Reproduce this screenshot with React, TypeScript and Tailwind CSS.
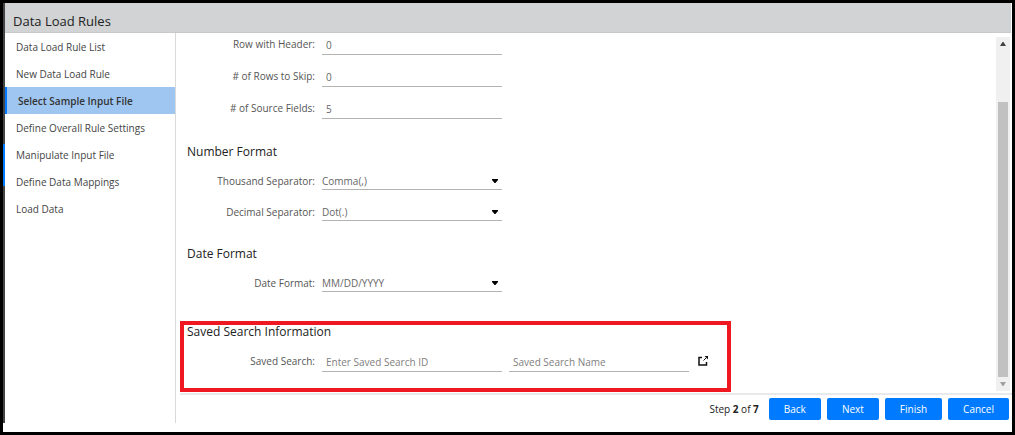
import type { ReactNode } from 'react'

const steps = [
  'Data Load Rule List',
  'New Data Load Rule',
  'Select Sample Input File',
  'Define Overall Rule Settings',
  'Manipulate Input File',
  'Define Data Mappings',
  'Load Data',
]

const activeStep = 'Select Sample Input File'

function SectionTitle({ children }: { children: ReactNode }) {
  return <h2 className="mb-[9px] text-[12px] leading-[14px] text-[#222]">{children}</h2>
}

function FieldRow({ id, label, children }: { id: string; label: string; children: ReactNode }) {
  return (
    <div className="flex items-center gap-[7px]">
      <label htmlFor={id} className="w-32 shrink-0 text-right leading-[18px] text-[#555]">
        {label}
      </label>
      {children}
    </div>
  )
}

function TextField({ id, value, placeholder }: { id: string; value?: string; placeholder?: string }) {
  return (
    <input
      id={id}
      type="text"
      defaultValue={value}
      placeholder={placeholder}
      aria-label={placeholder}
      className="h-[22px] w-[180px] border-b border-[#b3b3b3] bg-transparent px-1 pt-0.5 text-[#666] outline-none placeholder:text-[#808080]"
    />
  )
}

function SelectField({ id, options }: { id: string; options: string[] }) {
  return (
    <div className="relative h-[18px] w-[180px]">
      <select
        id={id}
        className="h-full w-full appearance-none border-b border-[#b3b3b3] bg-transparent pt-px text-[#666] outline-none"
      >
        {options.map((option) => (
          <option key={option}>{option}</option>
        ))}
      </select>
      <svg
        viewBox="0 0 6 4"
        className="pointer-events-none absolute top-[7px] right-1 h-1 w-1.5"
        aria-hidden="true"
      >
        <path d="M0 0h6v1L3.5 4h-1L0 1z" fill="#000" />
      </svg>
    </div>
  )
}

function WizardButton({ children }: { children: ReactNode }) {
  return (
    <button
      type="button"
      className="h-[22px] rounded-[2px] bg-[#007bff] px-[15px] text-white hover:bg-[#0069d9]"
    >
      {children}
    </button>
  )
}

function ScrollBar() {
  return (
    <div className="mt-1 mr-0.5 mb-0.5 flex w-[14px] shrink-0 flex-col items-center bg-[#f0f0f0]" aria-hidden="true">
      <svg viewBox="0 0 6 4" className="mt-[5px] h-1 w-1.5">
        <path d="M2.5 0h1L6 4H0z" fill="#444" />
      </svg>
      <div className="mt-14 w-[10px] flex-1 bg-[#c1c1c1]" />
      <svg viewBox="0 0 6 4" className="my-[5px] h-1 w-1.5">
        <path d="M0 0h6L3.5 4h-1z" fill="#a0a0a0" />
      </svg>
    </div>
  )
}

export default function App() {
  return (
    <div className="flex min-h-screen flex-col bg-black p-[3px] font-['Open_Sans','Noto_Sans',sans-serif] text-[10px]">
      <div className="flex flex-1 flex-col bg-white pb-[9px]">
        <div className="flex flex-1">
          {/* Window edge */}
          <div className="w-0.5 shrink-0 bg-[#444] pt-[141px]">
            <div className="h-[42px] bg-[#007bff]" />
          </div>

          <div className="flex min-w-0 flex-1 flex-col">
            <header className="mr-px flex h-[30px] items-center border-b border-[#c8c9ca] bg-[#d1d3d4] pt-1.5 pl-2">
              <h1 className="text-[13px] leading-5 text-[#222]">Data Load Rules</h1>
            </header>

            <div className="flex flex-1">
              {/* Steps */}
              <nav className="w-[171px] shrink-0 border-r border-[#d9d9d9]">
                <ul>
                  {steps.map((step) => (
                    <li key={step}>
                      <a
                        href="#"
                        aria-current={step === activeStep ? 'step' : undefined}
                        className={
                          step === activeStep
                            ? 'block border-l-2 border-[#007bff] bg-[#9fc6f0] pt-0.5 pl-[11px] leading-[25px] font-semibold text-[#333]'
                            : 'block pt-0.5 pl-[11px] leading-[25px] text-[#444]'
                        }
                      >
                        {step}
                      </a>
                    </li>
                  ))}
                </ul>
              </nav>

              <main className="flex min-w-0 flex-1 flex-col pl-1">
                <div className="flex flex-1 border-b-2 border-[#e9e9ec]">
                  <form className="min-w-0 flex-1 pb-px">
                    <div className="flex flex-col gap-[10px] pl-[7px]">
                      <FieldRow id="header-row" label="Row with Header:">
                        <TextField id="header-row" value="0" />
                      </FieldRow>
                      <FieldRow id="skip-rows" label="# of Rows to Skip:">
                        <TextField id="skip-rows" value="0" />
                      </FieldRow>
                      <FieldRow id="source-fields" label="# of Source Fields:">
                        <TextField id="source-fields" value="5" />
                      </FieldRow>
                    </div>

                    <section className="mt-[26px] pl-[7px]">
                      <SectionTitle>Number Format</SectionTitle>
                      <div className="flex flex-col gap-[13px] pt-1">
                        <FieldRow id="thousand" label="Thousand Separator:">
                          <SelectField id="thousand" options={['Comma(,)', 'Dot(.)']} />
                        </FieldRow>
                        <FieldRow id="decimal" label="Decimal Separator:">
                          <SelectField id="decimal" options={['Dot(.)', 'Comma(,)']} />
                        </FieldRow>
                      </div>
                    </section>

                    <section className="mt-[26px] pl-[7px]">
                      <SectionTitle>Date Format</SectionTitle>
                      <div className="pt-1">
                        <FieldRow id="date-format" label="Date Format:">
                          <SelectField id="date-format" options={['MM/DD/YYYY', 'DD/MM/YYYY']} />
                        </FieldRow>
                      </div>
                    </section>

                    {/* Highlighted section */}
                    <section className="mt-[29px] w-[551px] border-4 border-[#f01820] pb-4 pl-[3px]">
                      <SectionTitle>Saved Search Information</SectionTitle>
                      <div className="pt-0.5">
                        <FieldRow id="search-id" label="Saved Search:">
                          <TextField id="search-id" placeholder="Enter Saved Search ID" />
                          <TextField id="search-name" placeholder="Saved Search Name" />
                          <button type="button" aria-label="Open saved search" className="ml-0.5">
                            <svg viewBox="0 0 10 10" className="h-2.5 w-2.5" fill="none" stroke="#111">
                              <path d="M4 1.5H1V9h7.5V6" strokeWidth="1.5" />
                              <path d="M5.5 4.500l3-3" />
                              <path d="M6.500 0H10v3.500z" fill="#111" stroke="none" />
                            </svg>
                          </button>
                        </FieldRow>
                      </div>
                    </section>
                  </form>
                  <ScrollBar />
                </div>

                <footer className="flex items-center justify-end gap-1.5 pt-[3px] pr-[3px] pb-[3px]">
                  <span className="mr-1 text-[#222]">
                    Step <b>2</b> of <b>7</b>
                  </span>
                  <WizardButton>Back</WizardButton>
                  <WizardButton>Next</WizardButton>
                  <WizardButton>Finish</WizardButton>
                  <WizardButton>Cancel</WizardButton>
                </footer>
              </main>
            </div>
          </div>
        </div>
      </div>
    </div>
  )
}
